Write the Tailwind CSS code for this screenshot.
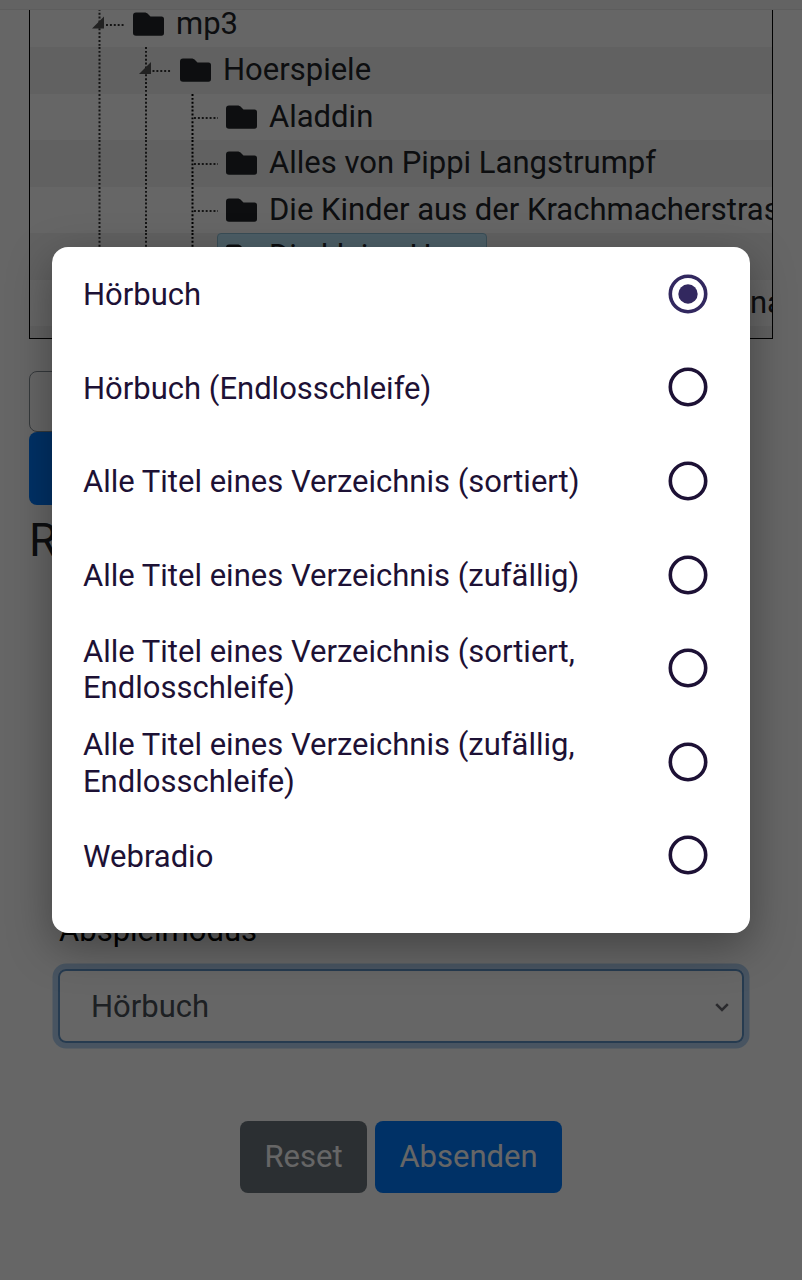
<!DOCTYPE html>
<html lang="de">
<head>
<meta charset="utf-8">
<title>Abspielmodus</title>
<script src="https://cdn.jsdelivr.net/npm/@tailwindcss/browser@4"></script>
</head>
<body class="h-[1280px] w-[802px] overflow-hidden bg-white font-['Roboto',sans-serif] text-[31px] leading-[46.5px] text-[#212529]">
<svg class="hidden">
  <symbol id="folder" viewBox="0 0 32 24"><path d="M3 .5H11.500C13 .5 14 1 15 2L17.500 4.500H28.500Q31 4.500 31 7V21Q31 23.700 28.500 23.700H3Q0 23.700 0 21V3.500Q0 .5 3 .5Z" fill="#212529"/></symbol>
</svg>
<main class="flex h-full flex-col">
  <div class="h-[10px] shrink-0 border-b border-[#e8e8e8] bg-[#f8f8f8]"></div>
  <div class="mx-[29px] h-[329px] shrink-0 overflow-hidden border border-t-0 border-black">
    <ul class="-mt-[9.500px] whitespace-nowrap">
      <li class="flex h-[46.500px] items-center">
        <svg class="h-full w-[103px] shrink-0" fill="none" stroke="#333" stroke-width="2" stroke-dasharray="1.950 1.950"><path d="M69.500 0V46.500M76 24H94"/><path d="M74 15.500V27.500H62Z" fill="#555" stroke="none"/></svg>
        <svg class="h-6 w-8 shrink-0"><use href="#folder"/></svg><span class="ml-[11px]">mp3</span>
      </li>
      <li class="flex h-[46.500px] items-center bg-[#f2f2f2]">
        <svg class="h-full w-[150px] shrink-0" fill="none" stroke="#333" stroke-width="2" stroke-dasharray="1.950 1.950"><path d="M69.500 0V46.500M116 0V46.500M122.500 24H141"/><path d="M121 15V27H109Z" fill="#555" stroke="none"/></svg>
        <svg class="h-6 w-8 shrink-0"><use href="#folder"/></svg><span class="ml-[11px]">Hoerspiele</span>
      </li>
      <li class="flex h-[46.500px] items-center">
        <svg class="h-full w-[196px] shrink-0" fill="none" stroke="#333" stroke-width="2" stroke-dasharray="1.950 1.950"><path d="M69.500 0V46.500M116 0V46.500M164 24H188"/><path d="M162.500 0V46.500" stroke="#000"/></svg>
        <svg class="h-6 w-8 shrink-0"><use href="#folder"/></svg><span class="ml-[11px]">Aladdin</span>
      </li>
      <li class="flex h-[46.500px] items-center bg-[#f2f2f2]">
        <svg class="h-full w-[196px] shrink-0" fill="none" stroke="#333" stroke-width="2" stroke-dasharray="1.950 1.950"><path d="M69.500 0V46.500M116 0V46.500M164 24H188"/><path d="M162.500 0V46.500" stroke="#000"/></svg>
        <svg class="h-6 w-8 shrink-0"><use href="#folder"/></svg><span class="ml-[11px]">Alles von Pippi Langstrumpf</span>
      </li>
      <li class="flex h-[46.500px] items-center">
        <svg class="h-full w-[196px] shrink-0" fill="none" stroke="#333" stroke-width="2" stroke-dasharray="1.950 1.950"><path d="M69.500 0V46.500M116 0V46.500M164 24H188"/><path d="M162.500 0V46.500" stroke="#000"/></svg>
        <svg class="h-6 w-8 shrink-0"><use href="#folder"/></svg><span class="ml-[11px] pt-px">Die Kinder aus der Krachmacherstrasse</span>
      </li>
      <li class="flex h-[46.500px] items-center bg-[#f2f2f2]">
        <svg class="h-full w-[187px] shrink-0" fill="none" stroke="#333" stroke-width="2" stroke-dasharray="1.950 1.950"><path d="M69.500 0V46.500M116 0V46.500M164 24H188"/><path d="M162.500 0V46.500" stroke="#000"/></svg>
        <span class="flex h-full w-[270px] items-center rounded-[4px] border border-[#8fc0d8] bg-[#beebff] pl-2"><svg class="h-6 w-8 shrink-0"><use href="#folder"/></svg><span class="ml-[11px]">Die kleine Hexe</span></span>
      </li>
      <li class="flex h-[46.500px] items-center justify-end"><span class="w-[22px]">nane</span></li>
      <li class="h-[46.500px] bg-[#f2f2f2]"></li>
    </ul>
  </div>
  <div class="ml-[29px] mr-[58px] mt-8 h-[61px] shrink-0 rounded-[8px] border-[1.500px] border-[#868e96]"></div>
  <div class="ml-[29px] mr-[58px] h-[73px] shrink-0 rounded-[8px] bg-[#007bff]"></div>
  <h2 class="ml-[29px] mt-[7px] h-[56px] shrink-0 text-[46px] leading-[56px]">RFID</h2>
  <label class="ml-[59px] mt-[340px] h-[46px] shrink-0 leading-[46px] text-black">Abspielmodus</label>
  <div class="mx-[58px] mt-[15px] flex h-[74px] shrink-0 items-center justify-between rounded-[8px] border-2 border-[#5f93c9] pl-[31px] pr-[13px] text-[#495057] ring-[5.500px] ring-[#b4d3f2]">
    <span class="pt-[2px]">Hörbuch</span>
    <svg class="mt-[2px] h-[9px] w-[14px]" viewBox="0 0 14 9" fill="none" stroke="#6a6a72" stroke-width="2.600"><path d="M1.200 1.200L7 7L12.800 1.200"/></svg>
  </div>
  <div class="mt-[78px] flex justify-center gap-2 text-white">
    <button class="h-[72px] w-[127px] rounded-[8px] bg-[#6c757d]">Reset</button>
    <button class="h-[72px] w-[187px] rounded-[8px] bg-[#007bff]">Absenden</button>
  </div>
</main>
<div class="absolute inset-0 bg-black/60"></div>
<div role="dialog" class="absolute left-[52px] top-[247px] h-[686px] w-[698px] rounded-[16px] bg-white pl-[31px] pr-[42.500px] text-[31px] leading-[36.500px] text-[#1d1135] shadow-[0_14px_44px_rgba(0,0,0,0.350)]">
  <div class="flex h-[93.600px] items-center justify-between"><span class="pt-[3px]">Hörbuch</span><svg class="size-10" viewBox="0 0 40 40" fill="none" stroke="#32285f" stroke-width="3.600"><circle cx="20" cy="20" r="17.700"/><circle cx="20" cy="20" r="9.700" fill="#32285f" stroke="none"/></svg></div>
  <div class="flex h-[93.600px] items-center justify-between"><span class="pt-[3px]">Hörbuch (Endlosschleife)</span><svg class="size-10" viewBox="0 0 40 40" fill="none" stroke="#1d1135" stroke-width="3.600"><circle cx="20" cy="20" r="17.700"/></svg></div>
  <div class="flex h-[93.600px] items-center justify-between"><span class="pt-[3px]">Alle Titel eines Verzeichnis (sortiert)</span><svg class="size-10" viewBox="0 0 40 40" fill="none" stroke="#1d1135" stroke-width="3.600"><circle cx="20" cy="20" r="17.700"/></svg></div>
  <div class="flex h-[93.600px] items-center justify-between"><span class="pt-[3px]">Alle Titel eines Verzeichnis (zufällig)</span><svg class="size-10" viewBox="0 0 40 40" fill="none" stroke="#1d1135" stroke-width="3.600"><circle cx="20" cy="20" r="17.700"/></svg></div>
  <div class="flex h-[93.600px] items-center justify-between"><span class="pt-[4px]">Alle Titel eines Verzeichnis (sortiert,<br>Endlosschleife)</span><svg class="size-10" viewBox="0 0 40 40" fill="none" stroke="#1d1135" stroke-width="3.600"><circle cx="20" cy="20" r="17.700"/></svg></div>
  <div class="flex h-[93.600px] items-center justify-between"><span class="pt-[4px]">Alle Titel eines Verzeichnis (zufällig,<br>Endlosschleife)</span><svg class="size-10" viewBox="0 0 40 40" fill="none" stroke="#1d1135" stroke-width="3.600"><circle cx="20" cy="20" r="17.700"/></svg></div>
  <div class="flex h-[93.600px] items-center justify-between"><span class="pt-[3px]">Webradio</span><svg class="size-10" viewBox="0 0 40 40" fill="none" stroke="#1d1135" stroke-width="3.600"><circle cx="20" cy="20" r="17.700"/></svg></div>
</div>
</body>
</html>
